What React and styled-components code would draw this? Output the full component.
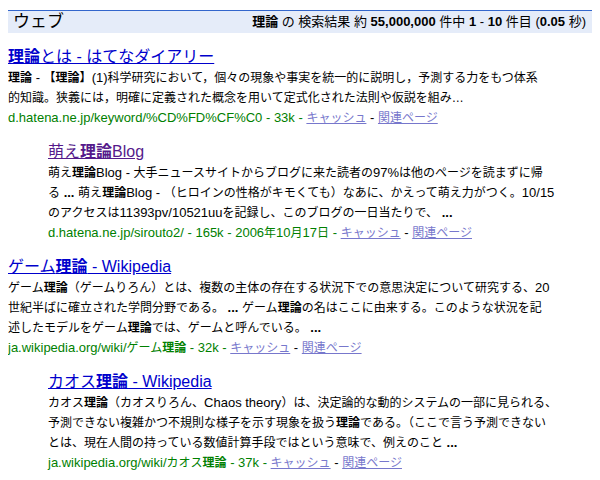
import React from "react";
import styled, { createGlobalStyle } from "styled-components";

const GlobalStyle = createGlobalStyle`
  html, body { background: #fff; }
  body {
    margin: 8px;
    font-family: "Liberation Sans", "Noto Sans CJK JP", sans-serif;
    color: #000;
  }
`;

const Page = styled.div`
  padding-top: 2px;
`;

const HeaderBar = styled.div`
  display: flex;
  align-items: center;
  justify-content: space-between;
  height: 22px;
  border-top: 1px solid #3366cc;
  background: #e5ecf9;
  padding: 0 6px 0 5px;
`;

const HeaderTitle = styled.div`
  font-size: 17px;
  line-height: 22px;
`;

const HeaderStats = styled.div`
  font-size: 13px;
  line-height: 22px;
  white-space: nowrap;
`;

const ResultList = styled.div`
  display: flex;
  flex-direction: column;
  gap: 13px;
  margin-top: 13px;
`;

const Result = styled.div`
  margin-left: ${(p) => (p.$indent ? "40px" : "0")};
`;

const TitleLink = styled.a`
  display: inline-block;
  font-size: 16px;
  line-height: 22px;
  color: ${(p) => (p.$visited ? "#551a8b" : "#0000cc")};
  text-decoration: underline;
  white-space: nowrap;
`;

const Snippet = styled.div`
  font-size: 13px;
  line-height: 20px;
  white-space: nowrap;
`;

const UrlLine = styled.div`
  font-size: 13px;
  line-height: 20px;
  white-space: nowrap;
`;

const Url = styled.span`
  color: #008000;
`;

const Sep = styled.span`
  color: #000;
`;

const SmallLink = styled.a`
  color: #7777cc;
  text-decoration: underline;
`;

/* Japanese runs render a pixel smaller than the Latin text beside them */
const Cjk = styled.span`
  font-size: 12px;
`;

const CJK_SPLIT = /([\u2026\u3000-\u30ff\u3400-\u9fff\uff00-\uffef]+)/;
const CJK_TEST = /^[\u2026\u3000-\u30ff\u3400-\u9fff\uff00-\uffef]+$/;

function runs(str, keyBase) {
  return str
    .split(CJK_SPLIT)
    .filter(Boolean)
    .map((s, i) =>
      CJK_TEST.test(s) ? (
        <Cjk key={`${keyBase}-${i}`}>{s}</Cjk>
      ) : (
        <React.Fragment key={`${keyBase}-${i}`}>{s}</React.Fragment>
      )
    );
}

/* "*text*" marks bold, "\n" marks a line break */
function Rich({ text }) {
  const lines = text.split("\n");
  return lines.map((line, li) => (
    <React.Fragment key={li}>
      {li > 0 && <br />}
      {line.split("*").map((seg, si) =>
        si % 2 === 1 ? (
          <b key={si}>{runs(seg, `${li}-${si}`)}</b>
        ) : (
          <React.Fragment key={si}>{runs(seg, `${li}-${si}`)}</React.Fragment>
        )
      )}
    </React.Fragment>
  ));
}

const results = [
  {
    title: "*理論*とは - はてなダイアリー",
    snippet:
      "*理論* - 【*理論*】(1)科学研究において，個々の現象や事実を統一的に説明し，予測する力をもつ体系\n的知識。狭義には，明確に定義された概念を用いて定式化された法則や仮説を組み…",
    url: "d.hatena.ne.jp/keyword/%CD%FD%CF%C0 - 33k - ",
  },
  {
    indent: true,
    visited: true,
    title: "萌え*理論*Blog",
    snippet:
      "萌え*理論*Blog - 大手ニュースサイトからブログに来た読者の97%は他のページを読まずに帰\nる *...* 萌え*理論*Blog - （ヒロインの性格がキモくても）なあに、かえって萌え力がつく。10/15\nのアクセスは11393pv/10521uuを記録し、このブログの一日当たりで、 *...*",
    url: "d.hatena.ne.jp/sirouto2/ - 165k - 2006年10月17日 - ",
  },
  {
    title: "ゲーム*理論* - Wikipedia",
    snippet:
      "ゲーム*理論*（ゲームりろん）とは、複数の主体の存在する状況下での意思決定について研究する、20\n世紀半ばに確立された学問分野である。 *...* ゲーム*理論*の名はここに由来する。このような状況を記\n述したモデルをゲーム*理論*では、ゲームと呼んでいる。 *...*",
    url: "ja.wikipedia.org/wiki/ゲーム*理論* - 32k - ",
  },
  {
    indent: true,
    title: "カオス*理論* - Wikipedia",
    snippet:
      "カオス*理論*（カオスりろん、Chaos theory）は、決定論的な動的システムの一部に見られる、\n予測できない複雑かつ不規則な様子を示す現象を扱う*理論*である。（ここで言う予測できない\nとは、現在人間の持っている数値計算手段ではという意味で、例えのこと *...*",
    url: "ja.wikipedia.org/wiki/カオス*理論* - 37k - ",
  },
];

function Title({ text }) {
  return text.split("*").map((seg, i) =>
    i % 2 === 1 ? <b key={i}>{seg}</b> : <React.Fragment key={i}>{seg}</React.Fragment>
  );
}

export default function App() {
  return (
    <>
      <GlobalStyle />
      <Page>
        <HeaderBar>
          <HeaderTitle>ウェブ</HeaderTitle>
          <HeaderStats>
            <b>理論</b> の 検索結果 約 <b>55,000,000</b> 件中 <b>1</b> - <b>10</b> 件目 (<b>0.05</b> 秒)
          </HeaderStats>
        </HeaderBar>
        <ResultList>
          {results.map((r, i) => (
            <Result key={i} $indent={r.indent}>
              <TitleLink href="#" $visited={r.visited}>
                <Title text={r.title} />
              </TitleLink>
              <Snippet>
                <Rich text={r.snippet} />
              </Snippet>
              <UrlLine>
                <Url>
                  <Rich text={r.url} />
                </Url>
                <SmallLink href="#">
                  <Cjk>キャッシュ</Cjk>
                </SmallLink>
                <Sep> - </Sep>
                <SmallLink href="#">
                  <Cjk>関連ページ</Cjk>
                </SmallLink>
              </UrlLine>
            </Result>
          ))}
        </ResultList>
      </Page>
    </>
  );
}
